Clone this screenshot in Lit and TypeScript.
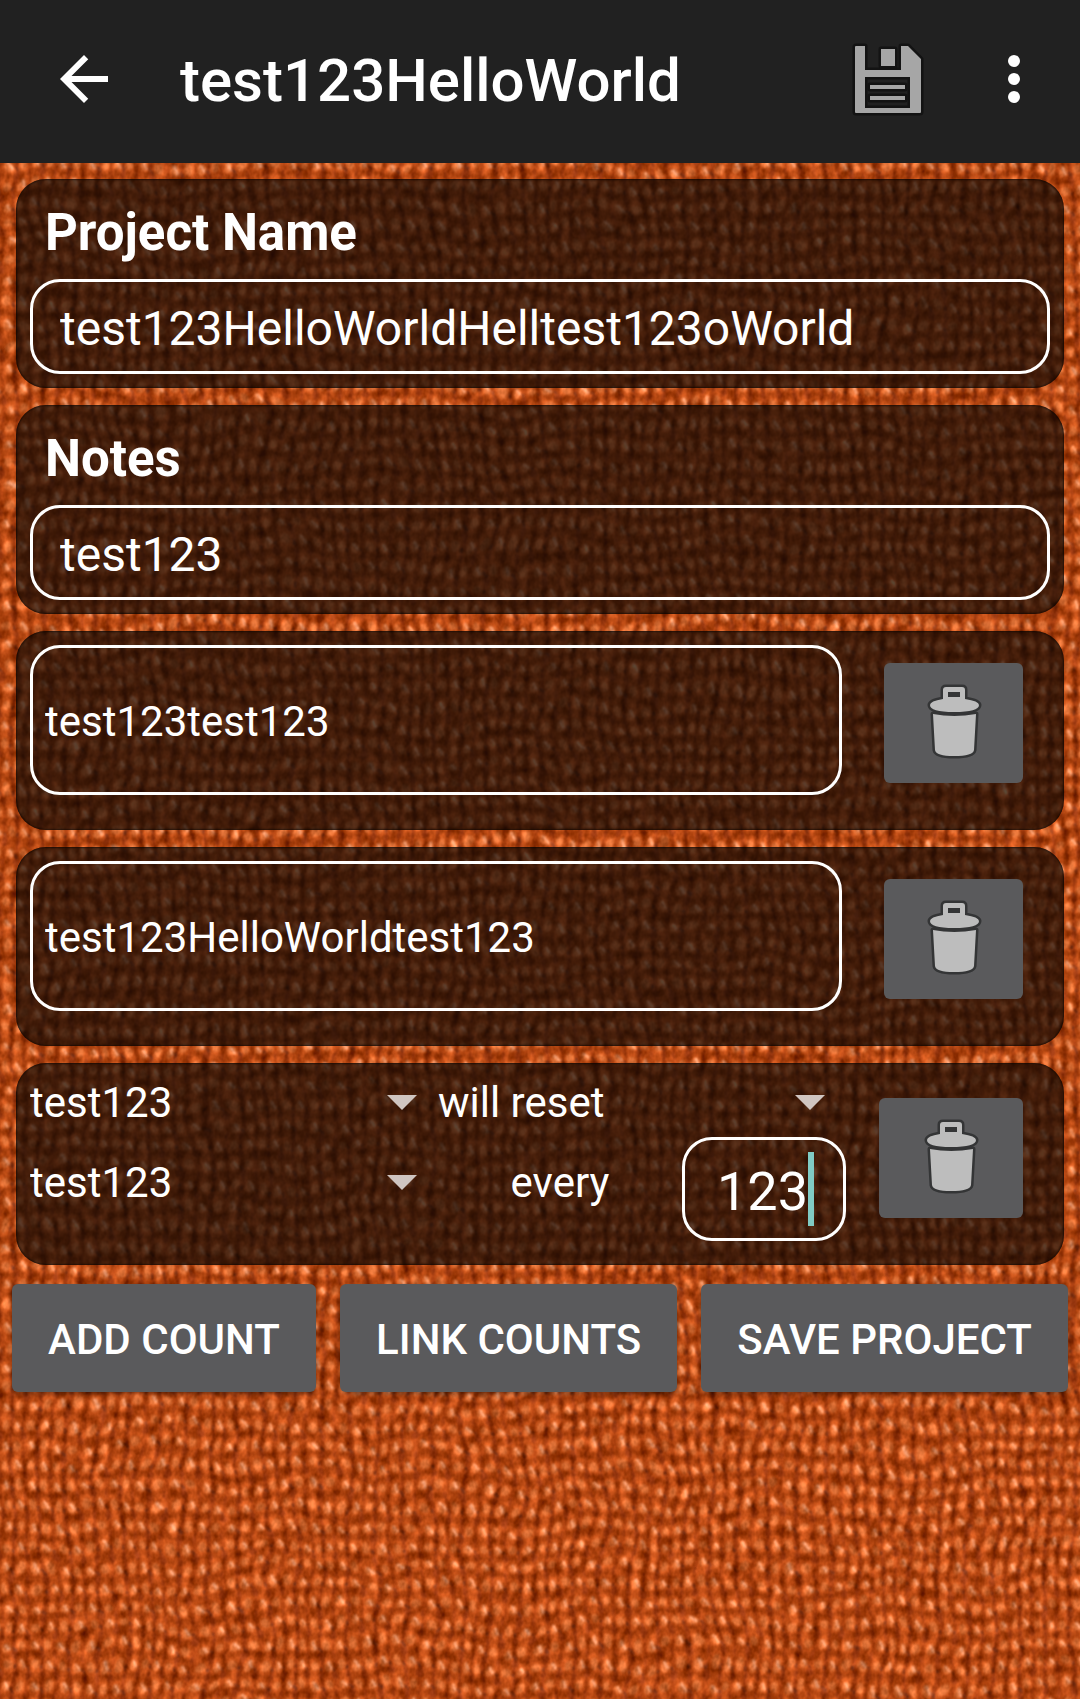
import { LitElement, html, css, svg } from "lit";
import { customElement, property, state } from "lit/decorators.js";

@customElement("woven-backdrop")
export class WovenBackdrop extends LitElement {
  static styles = css`
    :host {
      display: block;
      overflow: hidden;
      background: #b54811;
    }
    svg {
      display: block;
      width: 100%;
      height: 100%;
    }
  `;

  render() {
    return html`
      <svg aria-hidden="true">
        <defs>
          <pattern id="weave" width="28" height="40" patternUnits="userSpaceOnUse">
            <rect width="28" height="40" fill="#b94a14" />
            <rect y="13" width="28" height="5" fill="#a8400e" />
            <rect y="33" width="28" height="5" fill="#a8400e" />
            <rect x="12" width="4" height="40" fill="#9c380c" />
            <rect x="0" width="2" height="40" fill="#a33c0c" />
            <rect x="26" width="2" height="40" fill="#a33c0c" />
            <g fill="#8a2f0a">
              <ellipse cx="14" cy="16" rx="3" ry="5" />
              <ellipse cx="28" cy="16" rx="2" ry="4" />
              <ellipse cx="0" cy="36" rx="3" ry="5" />
              <ellipse cx="28" cy="36" rx="3" ry="5" />
              <ellipse cx="14" cy="36" rx="2" ry="3" />
            </g>
            <g fill="#d66c34">
              <ellipse cx="7" cy="7" rx="4" ry="5" />
              <ellipse cx="21" cy="6" rx="4" ry="5" />
              <ellipse cx="7" cy="26" rx="4" ry="5" />
              <ellipse cx="21" cy="27" rx="4" ry="5" />
            </g>
            <g stroke="#f4a47c" stroke-width="2">
              <path d="M6 3l4 7M20 22l4 7" />
            </g>
            <g stroke="#6b2a14" stroke-width="2">
              <path d="M12 8l4 4M26 28l3 4M13 27v4" />
            </g>
          </pattern>
          <filter id="fray" x="0" y="0" width="100%" height="100%" color-interpolation-filters="sRGB">
            <feTurbulence type="fractalNoise" baseFrequency="0.009 0.009" numOctaves="4" seed="4" result="bend" />
            <feDisplacementMap in="SourceGraphic" in2="bend" scale="30" xChannelSelector="R" yChannelSelector="G" result="bent" />
            <feGaussianBlur in="bent" stdDeviation="1" result="cloth" />
            <feTurbulence type="fractalNoise" baseFrequency="0.1 0.08" numOctaves="3" seed="9" result="grain" />
            <feColorMatrix in="grain" type="matrix"
              values="1.3 0 0 0 -0.15  1.3 0 0 0 -0.15  1.3 0 0 0 -0.15  0 0 0 0 1" result="fibres" />
            <feComposite in="cloth" in2="fibres" operator="arithmetic" k1="0.4" k2="0.82" k3="0.16" k4="-0.08" />
          </filter>
        </defs>
        <rect x="-40" y="-40" width="110%" height="110%" fill="url(#weave)" filter="url(#fray)" />
      </svg>
    `;
  }
}

const backIcon = svg`<svg class="glyph" viewBox="0 0 24 24" aria-hidden="true">
  <path fill="#fff" d="M20 11H7.83l5.59-5.59L12 4l-8 8 8 8 1.41-1.41L7.83 13H20v-2z" />
</svg>`;

const moreIcon = svg`<svg class="glyph" viewBox="0 0 24 24" aria-hidden="true">
  <g fill="#fff"><circle cx="12" cy="6" r="2" /><circle cx="12" cy="12" r="2" /><circle cx="12" cy="18" r="2" /></g>
</svg>`;

const saveIcon = svg`<svg class="glyph" viewBox="0 0 72 74" aria-hidden="true">
  <g fill="#a6a6a6" stroke="#131313" stroke-width="5" stroke-linejoin="round" paint-order="stroke">
    <path fill-rule="evenodd" d="M4 4h9v24h36V4h7l13 13v53q0 1-1 1H4q-1 0-1-1V5q0-1 1-1zM13 35v31h45V35z" />
    <path d="M29 7h14v17H29z" />
    <path d="M18 43h35v4H18zM18 54h35v4H18z" />
  </g>
</svg>`;

const trashIcon = svg`<svg class="trash" viewBox="0 0 96 96" aria-hidden="true">
  <g fill="#bdbdbd" stroke="#343536" stroke-width="5" stroke-linejoin="round" paint-order="stroke">
    <path d="M27 39L29 75Q30 81 48 81Q67 81 68 75L70 39Q48 43 27 39z" />
    <path d="M37 24V15Q37 12 40 12H56Q59 12 59 15V24Q73 26 73 30Q73 37 48 37Q24 37 24 30Q24 26 37 24z" />
    <path fill="#343536" stroke="none" d="M42 17h12v5H42z" />
  </g>
</svg>`;

const caretIcon = svg`<svg class="caret" viewBox="0 0 30 15" aria-hidden="true">
  <path fill="#cfc5c1" d="M0 0h30L15 15z" />
</svg>`;

@customElement("app-root")
export class AppRoot extends LitElement {
  static styles = css`
    :host {
      display: grid;
      min-height: 100vh;
      font-family: Roboto, "Liberation Sans", sans-serif;
      color: #fff;
    }
    *,
    *::before {
      box-sizing: border-box;
    }
    woven-backdrop,
    .screen {
      grid-area: 1 / 1;
      min-width: 0;
    }
    .screen {
      position: relative;
    }
    button,
    input,
    select {
      margin: 0;
      border: 0;
      padding: 0;
      background: none;
      color: inherit;
      font: inherit;
      outline: none;
    }
    .bar {
      display: flex;
      align-items: center;
      height: 163px;
      padding: 0 30px 5px 48px;
      background: #212121;
    }
    .icon-button {
      display: block;
      flex: none;
      width: 72px;
      height: 74px;
    }
    .glyph {
      display: block;
      width: 100%;
      height: 100%;
      overflow: visible;
    }
    .title {
      flex: 1;
      min-width: 0;
      margin: 0;
      padding: 4px 0 0 60px;
      font-size: 60px;
      line-height: 72px;
      font-weight: 500;
    }
    .more {
      margin-left: 54px;
    }
    .cards {
      display: flex;
      flex-direction: column;
      gap: 17px;
      padding: 16px 16px 19px;
    }
    .card {
      padding: 14px;
      border-radius: 30px;
      background: rgba(8, 6, 5, 0.66);
      box-shadow: inset 0 0 2px 1px rgba(0, 0, 0, 0.5);
    }
    .label {
      display: block;
      margin-bottom: 6px;
      padding-left: 15px;
      font-size: 51px;
      line-height: 80px;
      font-weight: 700;
    }
    .box {
      display: block;
      width: 100%;
      min-width: 0;
      height: 95px;
      padding: 4px 27px 0;
      border: 3px solid #fff;
      border-radius: 30px;
      font-size: 48px;
    }
    .count {
      display: flex;
      align-items: flex-start;
      gap: 42px;
      padding: 14px 41px 35px 14px;
    }
    .count .box {
      flex: 1;
      height: 150px;
      padding: 2px 12px 0;
      font-size: 42px;
    }
    .delete {
      display: grid;
      place-items: center;
      flex: none;
      width: 139px;
      height: 120px;
      margin-top: 18px;
      border-radius: 6px;
      background: #5a5a5c;
    }
    .trash {
      width: 96px;
      height: 96px;
    }
    .link {
      display: flex;
      align-items: flex-start;
      gap: 33px;
      padding: 4px 41px 24px 14px;
      font-size: 42px;
    }
    .link .delete {
      width: 144px;
      margin-top: 31px;
    }
    .left,
    .right {
      display: flex;
      flex: 1 1 0;
      flex-direction: column;
      min-width: 0;
    }
    .left {
      gap: 10px;
      margin-right: -33px;
    }
    .picker {
      display: grid;
      align-items: center;
      height: 70px;
    }
    .picker select,
    .picker .caret {
      grid-area: 1 / 1;
    }
    .picker select {
      width: 100%;
      height: 70px;
      appearance: none;
    }
    .caret {
      justify-self: end;
      width: 30px;
      height: 15px;
      margin-right: 21px;
      pointer-events: none;
    }
    .interval {
      display: flex;
      align-items: flex-start;
    }
    .every {
      flex: 1;
      line-height: 92px;
      text-align: center;
    }
    .number {
      display: flex;
      align-items: center;
      flex: none;
      width: 164px;
      height: 104px;
      padding-right: 29px;
      border: 3px solid #fff;
      border-radius: 30px;
      font-size: 54px;
    }
    .number input {
      flex: 1;
      min-width: 0;
      padding-top: 4px;
      text-align: right;
      caret-color: #80cbc4;
    }
    .cursor {
      width: 6px;
      height: 74px;
      background: #80cbc4;
    }
    .actions {
      display: flex;
      gap: 24px;
      padding: 0 12px;
    }
    .action {
      flex: 1 1 auto;
      height: 108px;
      padding-top: 2px;
      border-radius: 6px;
      background: #5a5a5c;
      box-shadow: 0 2px 4px rgba(0, 0, 0, 0.4);
      font-size: 42px;
      font-weight: 500;
      text-transform: uppercase;
    }
  `;

  @property() heading = "test123HelloWorld";
  @state() private counts = ["test123test123", "test123HelloWorldtest123"];

  private picker(label: string, value: string) {
    return html`<div class="picker">
      <select aria-label=${label}><option>${value}</option></select>
      ${caretIcon}
    </div>`;
  }

  render() {
    return html`
      <woven-backdrop></woven-backdrop>
      <div class="screen">
        <header class="bar">
          <button class="icon-button" aria-label="Back">${backIcon}</button>
          <h1 class="title">${this.heading}</h1>
          <button class="icon-button" aria-label="Save">${saveIcon}</button>
          <button class="icon-button more" aria-label="More options">${moreIcon}</button>
        </header>
        <main>
          <div class="cards">
            <section class="card">
              <label class="label" for="name">Project Name</label>
              <input class="box" id="name" .value=${"test123HelloWorldHelltest123oWorld"} />
            </section>
            <section class="card">
              <label class="label" for="notes">Notes</label>
              <input class="box" id="notes" .value=${"test123"} />
            </section>
            ${this.counts.map(
              (name) => html`<section class="card count">
                <input class="box" aria-label="Count name" .value=${name} />
                <button class="delete" aria-label="Delete count">${trashIcon}</button>
              </section>`
            )}
            <section class="card link">
              <div class="left">
                ${this.picker("Linked count", "test123")}
                ${this.picker("Trigger count", "test123")}
              </div>
              <div class="right">
                ${this.picker("Action", "will reset")}
                <div class="interval">
                  <label class="every" for="every">every</label>
                  <div class="number">
                    <input id="every" inputmode="numeric" .value=${"123"} />
                    <span class="cursor"></span>
                  </div>
                </div>
              </div>
              <button class="delete" aria-label="Delete link">${trashIcon}</button>
            </section>
          </div>
          <div class="actions">
            <button class="action">Add Count</button>
            <button class="action">Link Counts</button>
            <button class="action">Save Project</button>
          </div>
        </main>
      </div>
    `;
  }
}
